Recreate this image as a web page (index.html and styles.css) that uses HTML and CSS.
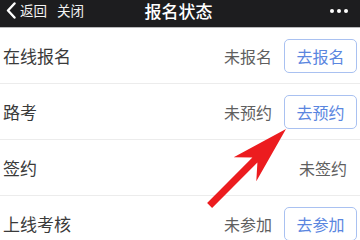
FILE: index.html
```html
<!DOCTYPE html>
<html lang="zh">
<head>
<meta charset="utf-8">
<link rel="stylesheet" href="styles.css">
</head>
<body>
<div class="page">
  <header class="topbar">
    <div class="nav-left">
      <svg class="chev" width="10" height="17" viewBox="0 0 10 17"><path d="M8.5 1.5 L2 8.5 L8.5 15.5" fill="none" stroke="#fff" stroke-width="2.4" stroke-linecap="round" stroke-linejoin="round"/></svg>
      <span class="nav-link">返回</span>
      <span class="nav-link close">关闭</span>
    </div>
    <div class="title">报名状态</div>
    <div class="more"><i></i><i></i><i></i></div>
  </header>
  <ul class="list">
    <li class="row">
      <span class="label">在线报名</span>
      <span class="right"><span class="status">未报名</span><span class="btn">去报名</span></span>
    </li>
    <li class="row">
      <span class="label">路考</span>
      <span class="right"><span class="status">未预约</span><span class="btn">去预约</span></span>
    </li>
    <li class="row">
      <span class="label">签约</span>
      <span class="right"><span class="status solo">未签约</span></span>
    </li>
    <li class="row">
      <span class="label">上线考核</span>
      <span class="right"><span class="status">未参加</span><span class="btn">去参加</span></span>
    </li>
  </ul>
  <svg class="arrow" width="360" height="240" viewBox="0 0 360 240">
    <polygon points="286,129 233.7,157.3 252.4,157.6 207.1,202.9 212.1,207.9 257.4,162.6 256.3,181.3" fill="#ec1c1f"/>
  </svg>
</div>
</body>
</html>
```
FILE: styles.css
```css
html, body {
  margin: 0;
  padding: 0;
  background: #fff;
}
body {
  font-family: "Noto Sans CJK SC", "Noto Sans", sans-serif;
  width: 360px;
  height: 240px;
  overflow: hidden;
}
.page {
  position: relative;
  width: 360px;
  height: 240px;
  overflow: hidden;
}
.topbar {
  height: 27px;
  background: #1d1d1f;
  border-bottom: 1px solid #b9b9bb;
  display: grid;
  grid-template-columns: 1fr auto 1fr;
  align-items: start;
  color: #fff;
}
.nav-left {
  display: flex;
  align-items: center;
  padding: 2px 0 0 6px;
}
.chev {
  display: block;
  margin-right: 4px;
}
.nav-link {
  font-size: 13.5px;
  line-height: 17px;
  color: #f2f2f2;
}
.nav-link.close {
  margin-left: 10px;
}
.title {
  padding-top: 2px;
  font-size: 17px;
  line-height: 18px;
  font-weight: 500;
  margin-right: 3px;
  color: #fff;
  white-space: nowrap;
}
.more {
  display: flex;
  justify-content: flex-end;
  gap: 3px;
  padding: 9px 12px 0 0;
}
.more i {
  width: 4px;
  height: 4px;
  border-radius: 50%;
  background: #fff;
  display: block;
}
.list {
  list-style: none;
  margin: 0;
  padding: 0;
}
.row {
  height: 55px;
  border-bottom: 1px solid #ececec;
  display: flex;
  align-items: center;
  justify-content: space-between;
  padding: 0 3px 0 3px;
}
.label {
  font-size: 17px;
  color: #3a3a3a;
  line-height: 20px;
}
.right {
  display: flex;
  align-items: center;
}
.status {
  font-size: 16px;
  color: #5f5f5f;
  line-height: 20px;
}
.status.solo {
  margin-right: 10px;
}
.btn {
  margin-left: 12px;
  width: 71px;
  height: 32px;
  border: 1px solid #a9c1f1;
  border-radius: 5px;
  color: #5a86df;
  font-size: 16px;
  display: flex;
  align-items: center;
  justify-content: center;
}
.arrow {
  position: absolute;
  left: 0;
  top: 0;
  pointer-events: none;
}
```
